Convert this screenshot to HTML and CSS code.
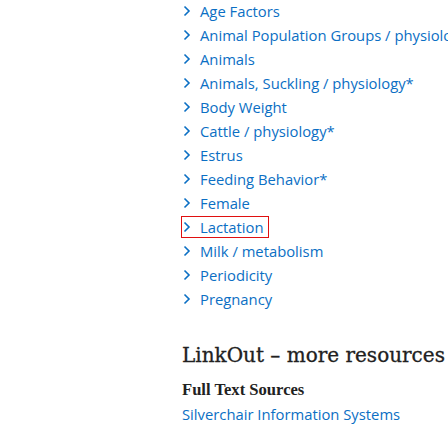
FILE: index.html
```html
<!DOCTYPE html>
<html>
<head>
<meta charset="utf-8">
<link rel="stylesheet" href="styles.css">
</head>
<body>
<div class="page">
  <ul class="terms">
    <li><a class="term"><svg class="chev" viewBox="0 0 8 12"><path d="M1.5 1.5 L6 6 L1.5 10.5"/></svg><span>Age Factors</span></a></li>
    <li><a class="term"><svg class="chev" viewBox="0 0 8 12"><path d="M1.5 1.5 L6 6 L1.5 10.5"/></svg><span>Animal Population Groups / physiology*</span></a></li>
    <li><a class="term"><svg class="chev" viewBox="0 0 8 12"><path d="M1.5 1.5 L6 6 L1.5 10.5"/></svg><span>Animals</span></a></li>
    <li><a class="term"><svg class="chev" viewBox="0 0 8 12"><path d="M1.5 1.5 L6 6 L1.5 10.5"/></svg><span>Animals, Suckling / physiology*</span></a></li>
    <li><a class="term"><svg class="chev" viewBox="0 0 8 12"><path d="M1.5 1.5 L6 6 L1.5 10.5"/></svg><span>Body Weight</span></a></li>
    <li><a class="term"><svg class="chev" viewBox="0 0 8 12"><path d="M1.5 1.5 L6 6 L1.5 10.5"/></svg><span>Cattle / physiology*</span></a></li>
    <li><a class="term"><svg class="chev" viewBox="0 0 8 12"><path d="M1.5 1.5 L6 6 L1.5 10.5"/></svg><span>Estrus</span></a></li>
    <li><a class="term"><svg class="chev" viewBox="0 0 8 12"><path d="M1.5 1.5 L6 6 L1.5 10.5"/></svg><span>Feeding Behavior*</span></a></li>
    <li><a class="term"><svg class="chev" viewBox="0 0 8 12"><path d="M1.5 1.5 L6 6 L1.5 10.5"/></svg><span>Female</span></a></li>
    <li><a class="term focused"><svg class="chev" viewBox="0 0 8 12"><path d="M1.5 1.5 L6 6 L1.5 10.5"/></svg><span>Lactation</span></a></li>
    <li><a class="term"><svg class="chev" viewBox="0 0 8 12"><path d="M1.5 1.5 L6 6 L1.5 10.5"/></svg><span>Milk / metabolism</span></a></li>
    <li><a class="term"><svg class="chev" viewBox="0 0 8 12"><path d="M1.5 1.5 L6 6 L1.5 10.5"/></svg><span>Periodicity</span></a></li>
    <li><a class="term"><svg class="chev" viewBox="0 0 8 12"><path d="M1.5 1.5 L6 6 L1.5 10.5"/></svg><span>Pregnancy</span></a></li>
  </ul>
  <h2 class="heading">LinkOut – more resources</h2>
  <h3 class="subheading">Full Text Sources</h3>
  <a class="source">Silverchair Information Systems</a>
</div>
</body>
</html>
```

FILE: styles.css
```css
html, body {
  margin: 0;
  padding: 0;
  background: #ffffff;
  overflow: hidden;
}
.page {
  width: 266px;
  overflow: hidden;
  padding-left: 182px;
  font-family: "Open Sans", "Noto Sans", sans-serif;
  color: #0071bc;
}
.terms {
  list-style: none;
  margin: -1px 0 0 0;
  padding: 0;
}
.terms li {
  height: 24px;
  display: flex;
  align-items: center;
}
.term {
  display: inline-flex;
  align-items: center;
  gap: 9px;
  font-size: 14.8px;
  line-height: 20px;
  color: #0b6fc4;
  white-space: nowrap;
  border: 1px solid transparent;
  margin-left: -1px;
  padding-right: 4px;
}
.term.focused {
  border-color: #e01010;
}
.chev {
  width: 8px;
  height: 12px;
  margin-left: 1px;
  fill: none;
  stroke: #0b6fc4;
  stroke-width: 1.6;
}
.heading {
  margin: 31px 0 0 0;
  font-family: "DejaVu Serif", serif;
  font-weight: normal;
  font-size: 20px;
  line-height: 26px;
  color: #212121;
  white-space: nowrap;
  -webkit-text-stroke: 0.3px #212121;
}
.subheading {
  margin: 11px 0 0 0;
  font-family: "Liberation Serif", serif;
  font-weight: bold;
  font-size: 16.6px;
  line-height: 22px;
  color: #212121;
}
.source {
  display: block;
  margin-top: 2px;
  font-size: 14.8px;
  line-height: 22px;
  color: #0b6fc4;
  white-space: nowrap;
}
```
